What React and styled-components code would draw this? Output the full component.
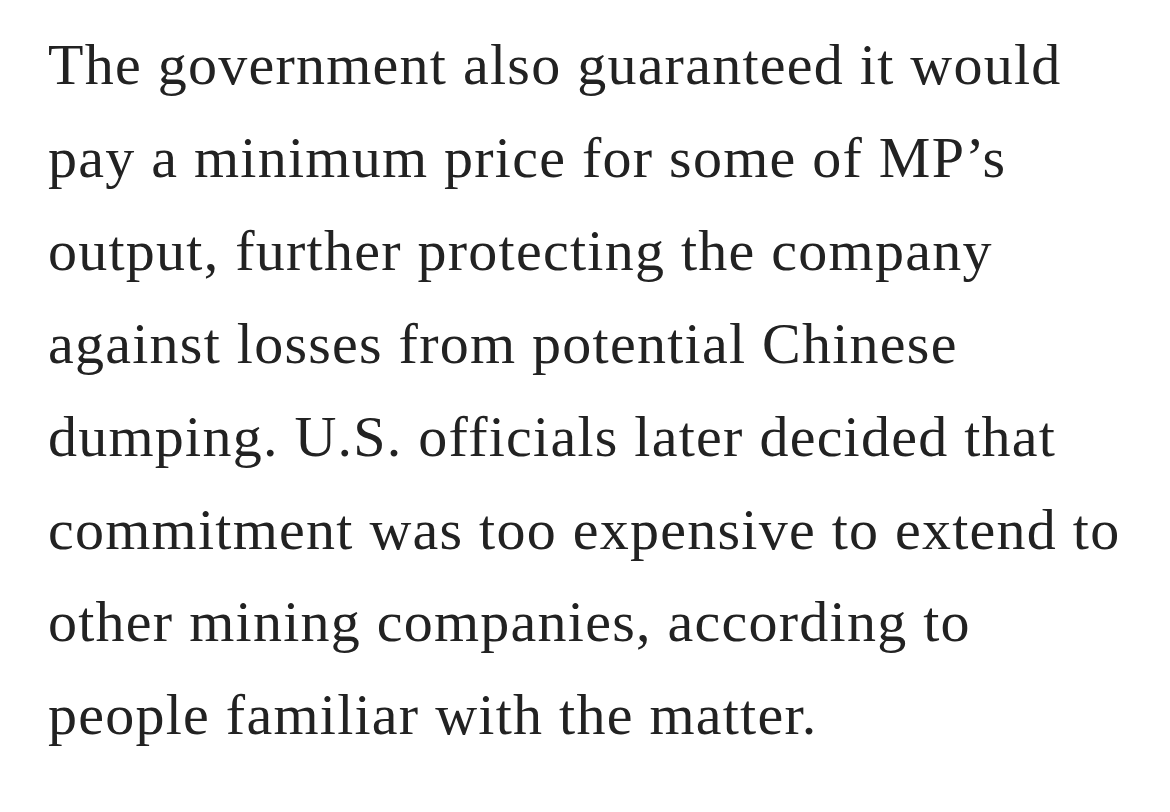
import React from "react";
import styled, { createGlobalStyle } from "styled-components";

const GlobalStyle = createGlobalStyle`
  html, body {
    margin: 0;
    padding: 0;
    background: #ffffff;
  }
`;

const Article = styled.div`
  width: 1170px;
  height: 812px;
  box-sizing: border-box;
  padding: 19px 0 0 48px;
  background: #ffffff;
  overflow: hidden;
`;

const Paragraph = styled.p`
  margin: 0;
  font-family: "Liberation Serif", "Times New Roman", serif;
  font-size: 58px;
  line-height: 92.9px;
  color: #222222;
  letter-spacing: 1.25px;
  white-space: nowrap;
`;

const Line = styled.span`
  display: block;
`;

const lines = [
  "The government also guaranteed it would",
  "pay a minimum price for some of MP\u2019s",
  "output, further protecting the company",
  "against losses from potential Chinese",
  "dumping. U.S. officials later decided that",
  "commitment was too expensive to extend to",
  "other mining companies, according to",
  "people familiar with the matter.",
];

export default function App() {
  return (
    <>
      <GlobalStyle />
      <Article>
        <Paragraph>
          {lines.map((l) => (
            <Line key={l}>{l}</Line>
          ))}
        </Paragraph>
      </Article>
    </>
  );
}
